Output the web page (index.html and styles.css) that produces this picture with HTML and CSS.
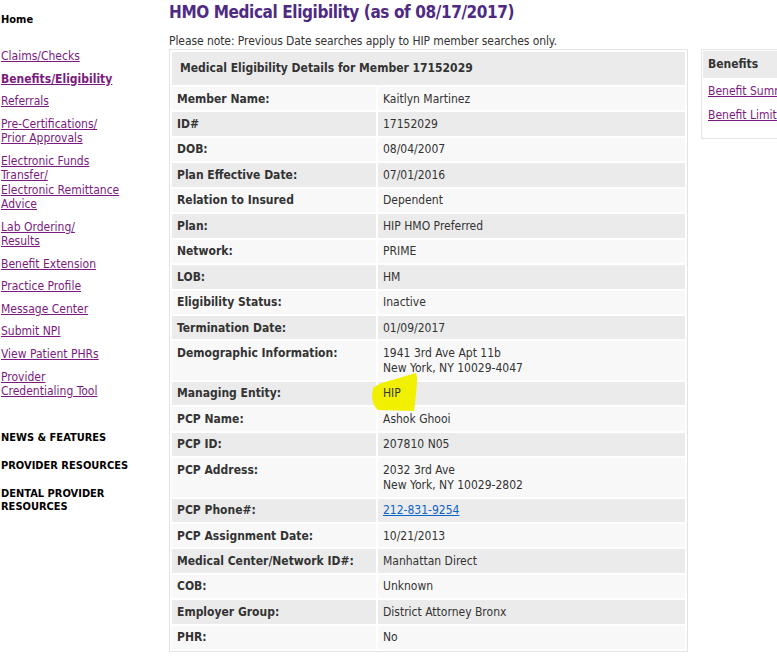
FILE: index.html
```html
<!DOCTYPE html>
<html>
<head>
<meta charset="utf-8">
<title>HMO Medical Eligibility</title>
<link rel="stylesheet" href="styles.css">
</head>
<body>
<div class="page">
  <nav class="nav">
    <div class="nav-home">Home</div>
    <ul class="nav-links">
      <li><a href="#">Claims/Checks</a></li>
      <li class="current"><a href="#">Benefits/Eligibility</a></li>
      <li><a href="#">Referrals</a></li>
      <li><a href="#">Pre-Certifications/<br>Prior Approvals</a></li>
      <li><a href="#">Electronic Funds<br>Transfer/<br>Electronic Remittance<br>Advice</a></li>
      <li><a href="#">Lab Ordering/<br>Results</a></li>
      <li><a href="#">Benefit Extension</a></li>
      <li><a href="#">Practice Profile</a></li>
      <li><a href="#">Message Center</a></li>
      <li><a href="#">Submit NPI</a></li>
      <li><a href="#">View Patient PHRs</a></li>
      <li><a href="#">Provider<br>Credentialing Tool</a></li>
    </ul>
    <div class="nav-section">NEWS &amp; FEATURES</div>
    <div class="nav-section">PROVIDER RESOURCES</div>
    <div class="nav-section">DENTAL PROVIDER<br>RESOURCES</div>
  </nav>

  <main class="main">
    <h1 class="title">HMO Medical Eligibility (as of 08/17/2017)</h1>
    <p class="note">Please note: Previous Date searches apply to HIP member searches only.</p>
    <div class="content">
      <table class="details">
        <thead>
          <tr><th colspan="2">Medical Eligibility Details for Member 17152029</th></tr>
        </thead>
        <tbody>
          <tr><td class="lbl">Member Name:</td><td>Kaitlyn Martinez</td></tr>
          <tr><td class="lbl">ID#</td><td>17152029</td></tr>
          <tr><td class="lbl">DOB:</td><td>08/04/2007</td></tr>
          <tr><td class="lbl">Plan Effective Date:</td><td>07/01/2016</td></tr>
          <tr><td class="lbl">Relation to Insured</td><td>Dependent</td></tr>
          <tr><td class="lbl">Plan:</td><td>HIP HMO Preferred</td></tr>
          <tr><td class="lbl">Network:</td><td>PRIME</td></tr>
          <tr><td class="lbl">LOB:</td><td>HM</td></tr>
          <tr><td class="lbl">Eligibility Status:</td><td>Inactive</td></tr>
          <tr><td class="lbl">Termination Date:</td><td>01/09/2017</td></tr>
          <tr><td class="lbl">Demographic Information:</td><td>1941 3rd Ave Apt 11b<br>New York, NY 10029-4047</td></tr>
          <tr><td class="lbl">Managing Entity:</td><td class="hl-cell"><svg class="highlight" width="50" height="40" viewBox="0 0 50 40"><path d="M3 15 C8 11 14 9 22 7 C30 5 38 2 46 0 L47 4 C47 12 46 22 44 38 L8 37 C4 34 2 28 2 22 Z" fill="#f0f000"/></svg><span class="hl-text">HIP</span></td></tr>
          <tr><td class="lbl">PCP Name:</td><td>Ashok Ghooi</td></tr>
          <tr><td class="lbl">PCP ID:</td><td>207810 N05</td></tr>
          <tr><td class="lbl">PCP Address:</td><td>2032 3rd Ave<br>New York, NY 10029-2802</td></tr>
          <tr><td class="lbl">PCP Phone#:</td><td><a class="phone" href="#">212-831-9254</a></td></tr>
          <tr><td class="lbl">PCP Assignment Date:</td><td>10/21/2013</td></tr>
          <tr><td class="lbl">Medical Center/Network ID#:</td><td>Manhattan Direct</td></tr>
          <tr><td class="lbl">COB:</td><td>Unknown</td></tr>
          <tr><td class="lbl">Employer Group:</td><td>District Attorney Bronx</td></tr>
          <tr><td class="lbl">PHR:</td><td>No</td></tr>
        </tbody>
      </table>

      <aside class="side">
        <div class="side-head">Benefits</div>
        <ul class="side-links">
          <li><a href="#">Benefit Summary</a></li>
          <li><a href="#">Benefit Limits</a></li>
        </ul>
      </aside>
    </div>
  </main>
</div>
</body>
</html>
```

FILE: styles.css
```css
html, body {
  margin: 0;
  padding: 0;
  overflow: hidden;
  background: #fff;
}
body {
  font-family: "DejaVu Sans Condensed", "DejaVu Sans", Tahoma, sans-serif;
  font-size: 12px;
  color: #333;
}
.page {
  display: flex;
  align-items: flex-start;
  width: 900px;
}
.nav {
  width: 168px;
  flex: none;
  padding-left: 1px;
  padding-top: 13px;
}
.nav-home {
  font-weight: bold;
  font-size: 11px;
  color: #000;
  line-height: 14px;
  margin-bottom: 22px;
}
.nav-links {
  list-style: none;
  margin: 0;
  padding: 0;
}
.nav-links li {
  line-height: 14.4px;
  margin-bottom: 8.2px;
}
.nav-links a {
  color: #7a1a7e;
  text-decoration: underline;
}
.nav-links li.current a {
  font-weight: bold;
  font-size: 12px;
}
.nav-links li:last-child {
  margin-bottom: 33px;
}
.nav-section {
  font-weight: bold;
  font-size: 11px;
  color: #000;
  line-height: 13px;
  margin-bottom: 15px;
}
.main {
  flex: none;
  width: 720px;
}
.title {
  margin: 0;
  padding-top: 1px;
  font-size: 17px;
  letter-spacing: -0.4px;
  line-height: 22px;
  font-weight: bold;
  color: #4e2a84;
}
.note {
  margin: 11px 0 0 0;
  line-height: 14px;
  letter-spacing: -0.08px;
}
.content {
  display: flex;
  align-items: flex-start;
  gap: 13px;
  margin-top: 1px;
}
.details {
  width: 519px;
  flex: none;
  border: 1px solid #e3e3e3;
  border-spacing: 2px;
  border-collapse: separate;
  background: #fff;
}
.details th {
  text-align: left;
  background: #ebebeb;
  font-size: 12px;
  font-weight: bold;
  color: #333;
  padding: 9px 8px;
  line-height: 15px;
}
.details td {
  padding: 4.6px 5px 3.85px 5px;
  line-height: 15px;
  vertical-align: top;
  color: #333;
}
.details td.lbl {
  width: 194px;
  font-weight: bold;
  font-size: 12px;
}
.details tbody tr:nth-child(odd) td {
  background: #f8f8f8;
}
.details tbody tr:nth-child(even) td {
  background: #ebebeb;
}
.hl-cell {
  position: relative;
}
.highlight {
  position: absolute;
  left: -8px;
  top: -9px;
}
.hl-text {
  position: relative;
}
.phone {
  color: #0a63c9;
  text-decoration: underline;
}
.side {
  flex: none;
  width: 120px;
  border: 1px solid #e5e5e5;
  padding: 1px;
}
.side-head {
  background: #ebebeb;
  font-weight: bold;
  font-size: 12px;
  padding: 6px 5px;
  line-height: 15px;
}
.side-links {
  list-style: none;
  margin: 0;
  padding: 5.5px 5px 14px 5px;
}
.side-links li {
  line-height: 15px;
  margin-bottom: 9px;
}
.side-links li:last-child {
  margin-bottom: 0;
}
.side-links a {
  color: #7a1a7e;
  text-decoration: underline;
  white-space: nowrap;
}
```
